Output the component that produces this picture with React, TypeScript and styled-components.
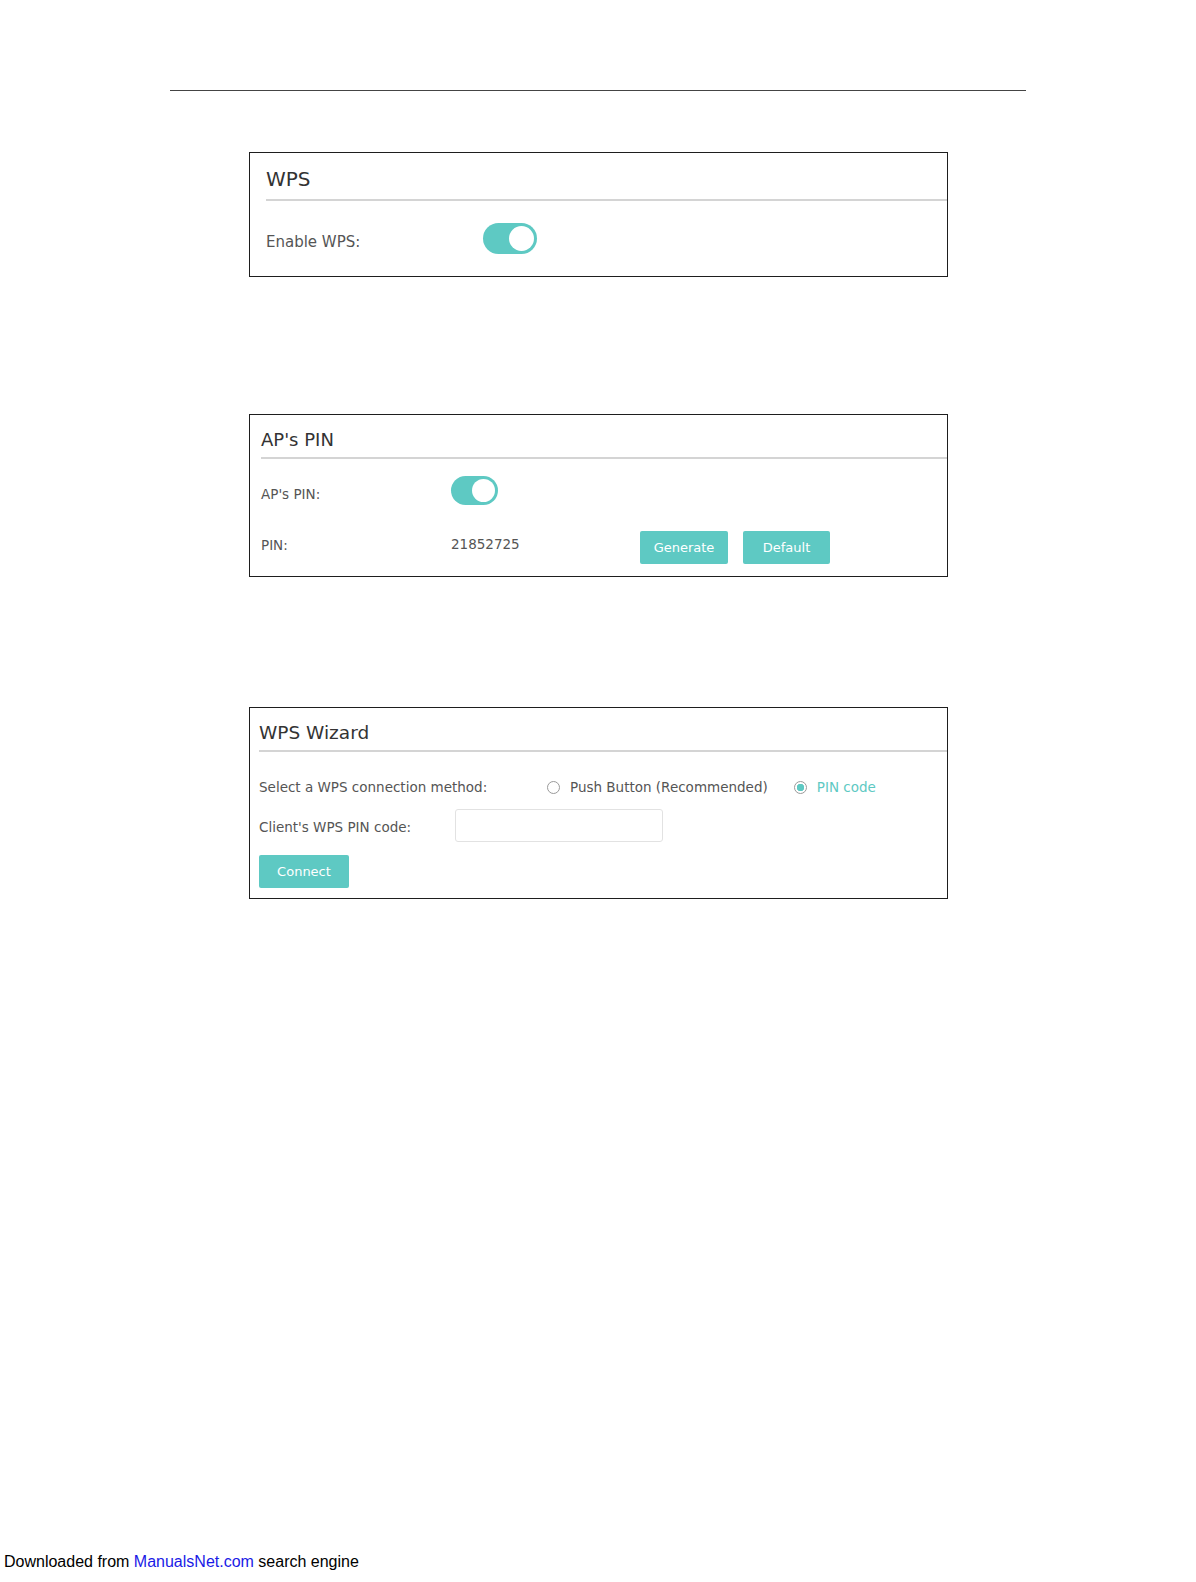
import React from "react"
import styled, { createGlobalStyle } from "styled-components"

const teal = "#5ec9c3"

const GlobalStyle = createGlobalStyle`
  html, body {
    margin: 0;
    padding: 0;
    background: #fff;
  }
`

const Page = styled.div`
  width: 1196px;
  height: 1582px;
  display: flex;
  flex-direction: column;
  font-family: "DejaVu Sans", Verdana, sans-serif;
  color: #555;
`

const TopRule = styled.div`
  margin: 90px 0 0 170px;
  width: 856px;
  height: 1px;
  background: #444;
`

const Panel = styled.section<{ top: number; height: number }>`
  box-sizing: border-box;
  margin: ${({ top }) => top}px 0 0 249px;
  width: 699px;
  height: ${({ height }) => height}px;
  border: 1px solid #1e1e1e;
  display: flex;
  flex-direction: column;
`

const PanelTitle = styled.h2<{ inset: number; size: number; height: number }>`
  box-sizing: border-box;
  margin: 0 0 0 ${({ inset }) => inset}px;
  height: ${({ height }) => height}px;
  padding-top: 6px;
  display: flex;
  align-items: center;
  font-size: ${({ size }) => size}px;
  font-weight: 400;
  color: #333;
  border-bottom: 2px solid #d4d4d4;
`

const Row = styled.div<{ inset: number; mt: number; height: number }>`
  display: flex;
  align-items: center;
  margin-top: ${({ mt }) => mt}px;
  height: ${({ height }) => height}px;
  padding-left: ${({ inset }) => inset}px;
`

// shift moves the text down (positive) or up (negative) against the row centre
const Label = styled.span<{ width: number; size: number; shift?: number }>`
  width: ${({ width }) => width}px;
  flex: none;
  font-size: ${({ size }) => size}px;
  color: #555;
  margin-top: ${({ shift = 0 }) => Math.max(shift, 0) * 2}px;
  margin-bottom: ${({ shift = 0 }) => Math.max(-shift, 0) * 2}px;
`

const Value = styled.span<{ width: number }>`
  width: ${({ width }) => width}px;
  flex: none;
  font-size: 13.5px;
  color: #555;
  margin-bottom: 7px;
`

const Toggle = styled.div<{ w: number; h: number }>`
  flex: none;
  width: ${({ w }) => w}px;
  height: ${({ h }) => h}px;
  border-radius: ${({ h }) => h / 2}px;
  background: ${teal};
  position: relative;

  &::after {
    content: "";
    position: absolute;
    right: 3px;
    top: 3px;
    width: ${({ h }) => h - 6}px;
    height: ${({ h }) => h - 6}px;
    border-radius: 50%;
    background: #fff;
  }
`

const Button = styled.button<{ w: number; gap?: number }>`
  flex: none;
  width: ${({ w }) => w}px;
  height: 33px;
  border: none;
  border-radius: 2px;
  background: ${teal};
  color: #fff;
  font-family: inherit;
  font-size: 13px;
  padding: 0;
  margin-right: ${({ gap = 0 }) => gap}px;
`

const Radio = styled.label<{ checked?: boolean }>`
  display: flex;
  align-items: center;
  gap: 10px;
  font-size: 13.5px;
  color: ${({ checked }) => (checked ? teal : "#555")};
  margin-right: 26px;
`

const RadioDot = styled.span<{ checked?: boolean }>`
  box-sizing: border-box;
  width: 13px;
  height: 13px;
  border-radius: 50%;
  border: 1px solid #9a9a9a;
  background: ${({ checked }) =>
    checked ? `radial-gradient(circle, ${teal} 0 3.5px, #fff 4px)` : "#fff"};
`

const TextInput = styled.input`
  box-sizing: border-box;
  flex: none;
  width: 208px;
  height: 33px;
  border: 1px solid #e2e2e2;
  border-radius: 3px;
  outline: none;
  background: #fff;
`

const Footer = styled.div`
  margin-top: auto;
  padding: 0 0 11px 4px;
  font-family: "Liberation Sans", Arial, sans-serif;
  font-size: 16px;
  color: #000;
`

const FooterLink = styled.span`
  color: #1a1ae6;
`

export default function App() {
  return (
    <Page>
      <GlobalStyle />
      <TopRule />

      <Panel top={61} height={125}>
        <PanelTitle inset={16} size={20} height={48}>
          WPS
        </PanelTitle>
        <Row inset={16} mt={22} height={31}>
          <Label width={217} size={15} shift={3}>
            Enable WPS:
          </Label>
          <Toggle w={54} h={31} />
        </Row>
      </Panel>

      <Panel top={137} height={163}>
        <PanelTitle inset={11} size={18} height={44}>
          AP's PIN
        </PanelTitle>
        <Row inset={11} mt={17} height={29}>
          <Label width={190} size={13.5} shift={3}>
            AP's PIN:
          </Label>
          <Toggle w={47} h={29} />
        </Row>
        <Row inset={11} mt={26} height={33}>
          <Label width={190} size={13.5} shift={-3}>
            PIN:
          </Label>
          <Value width={189}>21852725</Value>
          <Button w={88} gap={15}>
            Generate
          </Button>
          <Button w={87}>Default</Button>
        </Row>
      </Panel>

      <Panel top={130} height={192}>
        <PanelTitle inset={9} size={18.5} height={44}>
          WPS Wizard
        </PanelTitle>
        <Row inset={9} mt={25} height={20}>
          <Label width={288} size={13.5}>
            Select a WPS connection method:
          </Label>
          <Radio>
            <RadioDot />
            Push Button (Recommended)
          </Radio>
          <Radio checked>
            <RadioDot checked />
            PIN code
          </Radio>
        </Row>
        <Row inset={9} mt={12} height={33}>
          <Label width={196} size={13.5} shift={1}>
            Client's WPS PIN code:
          </Label>
          <TextInput />
        </Row>
        <Row inset={9} mt={12} height={34}>
          <Button w={90}>Connect</Button>
        </Row>
      </Panel>

      <Footer>
        Downloaded from <FooterLink>ManualsNet.com</FooterLink> search engine
      </Footer>
    </Page>
  )
}
